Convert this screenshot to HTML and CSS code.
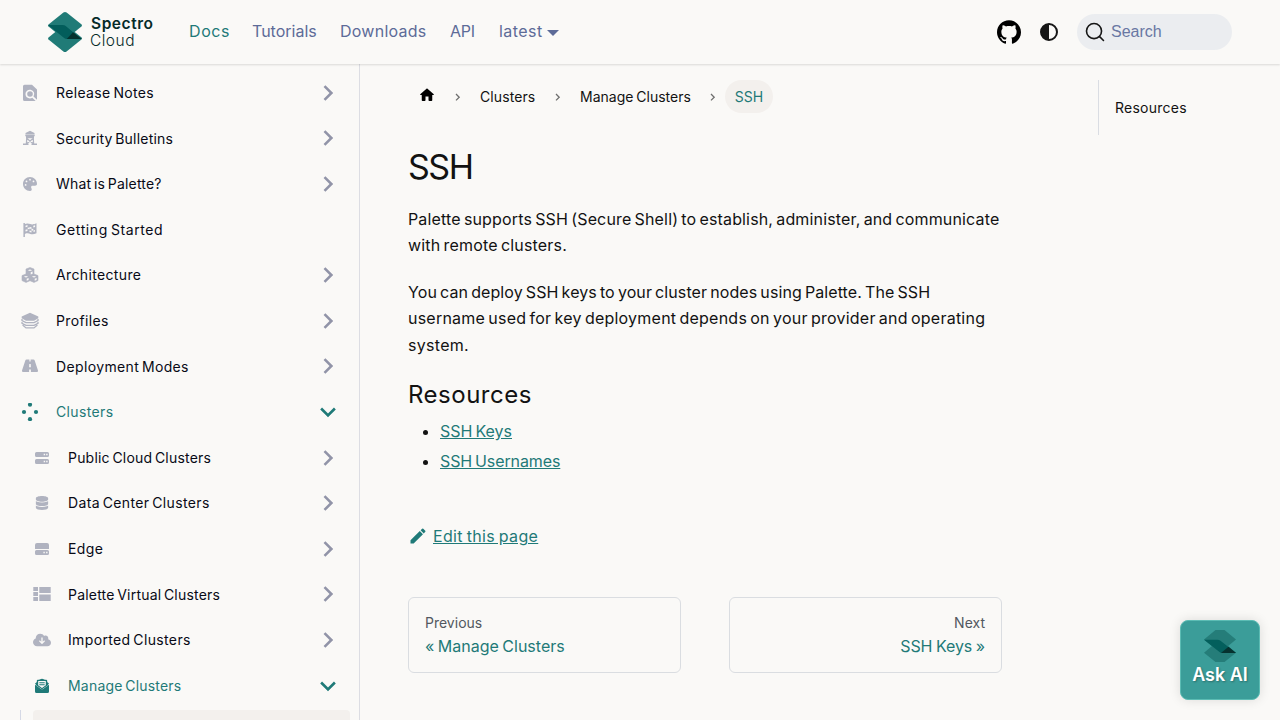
FILE: index.html
```html
<!DOCTYPE html>
<html lang="en">
<head>
<meta charset="utf-8">
<title>SSH | Palette</title>
<link rel="stylesheet" href="styles.css">
</head>
<body>
<svg class="sprite" width="0" height="0">
  <symbol id="chev" viewBox="0 0 24 24"><path d="M7.41 15.41 12 10.83l4.59 4.58L18 14l-6-6-6 6z"/></symbol>
  <symbol id="mark" viewBox="0 0 34 40">
    <path fill="#207b77" d="M15.400 .5q1.600-1 3.200 0L33.600 12.600q.8.900-.2 1.800L18.600 26.500q-1.600 1-3.200 0L.5 14.400q-.9-.9 0-1.800z"/>
    <path fill="#207b77" d="M15.400 13.500q1.600-1 3.200 0L33.600 25.600q.8.900-.2 1.800L18.600 39.500q-1.600 1-3.200 0L.5 27.400q-.9-.9 0-1.800z"/>
    <path fill="#025d5b" d="M0 13h14.500q2 0 3.500 1.200L33.300 27H19q-1.800 0-3.200-1.200z"/>
    <path fill="#05332f" d="M25 20.200 33.900 27H18.800z"/>
  </symbol>
</svg>
<header class="navbar">
  <a class="brand"><svg class="logo" width="34" height="40"><use href="#mark"/></svg>
    <svg class="wordmark" width="66" height="34"><text class="w1" x="1" y="17" textLength="62">Spectro</text><text class="w2" x="0" y="33.500" textLength="44.500">Cloud</text></svg></a>
  <nav class="links"><a class="on l1">Docs</a><a class="l2">Tutorials</a><a class="l3">Downloads</a><a class="l4">API</a><a class="l5">latest</a><i class="caret"></i></nav>
  <div class="tools">
    <svg class="gh" width="24" height="24" viewBox="0 0 24 24"><path d="M12 .297c-6.63 0-12 5.373-12 12 0 5.303 3.438 9.8 8.205 11.385.6.113.82-.258.82-.577 0-.285-.01-1.04-.015-2.04-3.338.724-4.042-1.61-4.042-1.61C4.422 18.07 3.633 17.7 3.633 17.7c-1.087-.744.084-.729.084-.729 1.205.084 1.838 1.236 1.838 1.236 1.07 1.835 2.809 1.305 3.495.998.108-.776.417-1.305.76-1.605-2.665-.3-5.466-1.332-5.466-5.93 0-1.31.465-2.38 1.235-3.22-.135-.303-.54-1.523.105-3.176 0 0 1.005-.322 3.3 1.23.96-.267 1.98-.399 3-.405 1.02.006 2.04.138 3 .405 2.28-1.552 3.285-1.23 3.285-1.23.645 1.653.24 2.873.12 3.176.765.84 1.23 1.91 1.23 3.22 0 4.61-2.805 5.625-5.475 5.92.42.36.81 1.096.81 2.22 0 1.606-.015 2.896-.015 3.286 0 .315.21.69.825.57C20.565 22.092 24 17.592 24 12.297c0-6.627-5.373-12-12-12"/></svg>
    <svg class="half" width="18" height="18" viewBox="0 0 18 18"><circle cx="9" cy="9" r="8" fill="none" stroke="#161616" stroke-width="2"/><path d="M9 1a8 8 0 0 0 0 16z"/></svg>
    <div class="search"><svg width="20" height="20" viewBox="0 0 20 20"><path d="M14.386 14.386l4.088 4.088-4.088-4.088A7.533 7.533 0 1 1 3.733 3.733a7.533 7.533 0 0 1 10.653 10.653z" fill="none" stroke="#161616" stroke-width="1.600" stroke-linecap="round" stroke-linejoin="round"/></svg><span>Search</span></div>
  </div>
</header>
<div class="page">
  <aside class="sidebar">
    <ul class="menu">
      <li><svg class="ic" viewBox="0 0 18 18"><path fill-rule="evenodd" d="M3.500.8H11l5 4.700v10.300L12.500 12.500a4.400 4.400 0 1 0-1.200 1.200L14.700 17H3.500Q2 17 2 15.500V2.300Q2 .8 3.500.8zM9 7.200a2.800 2.800 0 1 1 0 5.600 2.800 2.800 0 0 1 0-5.600z"/></svg><span class="s0">Release Notes</span><svg class="ch"><use href="#chev"/></svg></li>
      <li><svg class="ic" viewBox="0 0 18 18"><path d="M4.500 4 9 1.700 13.500 4v1.400H4.500zM5 6.200h8v3H5z"/><path fill="none" stroke="#b0b3c0" stroke-width="1.300" d="M4.300 6.500h9.400M5.800 8.500 5.400 15M12.200 8.500l.4 6.500M6 9.500l6 5M12 9.500l-6 5"/><path d="M2 14.600h5.500v1.400H2zM10.500 14.600H16v1.400h-5.500z"/></svg><span class="s1">Security Bulletins</span><svg class="ch"><use href="#chev"/></svg></li>
      <li><svg class="ic sm" viewBox="0 0 512 512"><path d="M512 256c0 .9 0 1.800 0 2.700-.4 36.500-33.600 61.300-70.100 61.300H344c-26.500 0-48 21.500-48 48 0 3.400.4 6.700 1 9.900 2.100 10.200 6.500 20 10.800 29.900 6.100 13.800 12.100 27.500 12.100 42 0 31.800-21.600 60.700-53.400 62-3.500.1-7 .2-10.600.2C114.600 512 0 397.400 0 256S114.600 0 256 0 512 114.600 512 256zM128 288a32 32 0 1 0-64 0 32 32 0 1 0 64 0zm0-96a32 32 0 1 0 0-64 32 32 0 1 0 0 64zM288 96a32 32 0 1 0-64 0 32 32 0 1 0 64 0zm96 96a32 32 0 1 0 0-64 32 32 0 1 0 0 64z"/></svg><span class="s2">What is Palette?</span><svg class="ch"><use href="#chev"/></svg></li>
      <li><svg class="ic" viewBox="0 0 18 18"><path d="M2.400 2h1.500v1c2-1 3.900-.5 5.400.1s3.500.5 6.200-.8v10c-2.700 1.300-4.700 1.200-6.200.6s-3.400-.8-5.400 0V16H2.400z"/><path fill="#faf9f7" d="M4.500 4.700l2-.6v1.600l-2 .6zm4 1.300 2 .3v1.600l-2-.3zm3.800-1.200 1.800-.5v1.600l-1.800.5zM6.700 6.500l1.800.2v1.600l-1.800-.2zM4.500 8.800l2-.5v1.600l-2 .5zm6-.7 1.800-.3v1.600l-1.800.4zM8.500 9.600l2 .3v1.500l-2-.4zm4-.1 1.500-.4v1.500l-1.500.4z"/></svg><span class="s3">Getting Started</span></li>
      <li><svg class="ic" viewBox="0 0 18 18"><path d="M9 1.500 13 3V8l4 1.600v5L13 16.400l-4-1.700-4 1.700-4-1.800v-5L5 8V3z" stroke="#b0b3c0" stroke-linejoin="round" stroke-width=".6"/><g fill="#faf9f7"><path d="M6.800 4.200 9 3.400l2.200.8L9 5zM9.700 6.200l1.900-.7V7.700l-1.900.8zM2.800 10.700l2.200-.8 2.200.8-2.200.8zm8 0 2.200-.8 2.200.8-2.200.8zM5.700 12.700l1.900-.7V14l-1.900.8zm8 0 1.900-.7V14l-1.900.8z"/></g></svg><span class="s4">Architecture</span><svg class="ch"><use href="#chev"/></svg></li>
      <li><svg class="ic" viewBox="0 0 18 18"><path d="M9 .8 17.300 4.500v1.800L13 8.800H5L.7 6.300V4.500z"/><path fill="none" stroke="#b0b3c0" stroke-width="1.300" d="M1 7v1.600L5 10.700h8l4-2.100V7M1 9.900v1.400L5 13.300h8l4-2V9.900M1.600 13 5 15.900h8l3.400-2.900"/></svg><span class="s5">Profiles</span><svg class="ch"><use href="#chev"/></svg></li>
      <li><svg class="ic" viewBox="0 0 18 18"><path d="M5.500 2.500h2.900v2h1.200v-2h2.900q.8 0 1.100.8L17 13.500q.3 1.500-1.200 1.500H9.900v-2.500H8.100V15H2.200Q.7 15 1 13.500L4.400 3.300q.3-.8 1.100-.8zM8.300 7l-.2 3.300h1.800L9.700 7z" fill-rule="evenodd"/></svg><span class="s6">Deployment Modes</span><svg class="ch"><use href="#chev"/></svg></li>
      <li class="active"><svg class="ic" viewBox="0 0 18 18"><circle cx="9" cy="1.700" r="2.100"/><circle cx="3" cy="9" r="2.100"/><circle cx="15" cy="9" r="2.100"/><circle cx="9" cy="16.200" r="2.100"/></svg><span class="s7">Clusters</span><svg class="ch down"><use href="#chev"/></svg></li>
      <li class="sub"><svg class="ic" viewBox="0 0 18 18"><path fill-rule="evenodd" d="M3.500 3h11q1.500 0 1.500 1.500v2Q16 8 14.500 8h-11Q2 8 2 6.500v-2Q2 3 3.500 3zm7.200 1.800v1.400h1.400V4.800zm2.500 0v1.400h1.400V4.800zM3.500 10h11q1.500 0 1.500 1.500v2q0 1.500-1.500 1.500h-11Q2 15 2 13.500v-2Q2 10 3.500 10zm7.200 1.800v1.400h1.400v-1.400zm2.500 0v1.400h1.400v-1.400z"/></svg><span class="s8">Public Cloud Clusters</span><svg class="ch"><use href="#chev"/></svg></li>
      <li class="sub"><svg class="ic sm" viewBox="0 0 448 512"><path d="M448 80v48c0 44.200-100.300 80-224 80S0 172.200 0 128V80C0 35.800 100.300 0 224 0s224 35.800 224 80zM393.200 214.700c20.800-7.400 39.900-16.900 54.800-28.600V288c0 44.200-100.300 80-224 80S0 332.200 0 288V186.100c14.900 11.800 34 21.200 54.800 28.600C99.700 230.700 159.500 240 224 240s124.300-9.300 169.200-25.300zM0 346.100c14.900 11.800 34 21.200 54.800 28.600C99.700 390.700 159.500 400 224 400s124.300-9.300 169.200-25.300c20.800-7.400 39.900-16.900 54.800-28.600V432c0 44.200-100.300 80-224 80S0 476.200 0 432v-85.900z"/></svg><span class="s9">Data Center Clusters</span><svg class="ch"><use href="#chev"/></svg></li>
      <li class="sub"><svg class="ic" viewBox="0 0 18 18"><path fill-rule="evenodd" d="M4 3h10q2 0 2 2v4H2V5q0-2 2-2zM3.500 10h11q1.500 0 1.500 1.500v2q0 1.500-1.500 1.500h-11Q2 15 2 13.500v-2Q2 10 3.500 10zm6.900 1.800v1.400h1.400v-1.400zm2.700 0v1.400h1.400v-1.400z"/></svg><span class="s10">Edge</span><svg class="ch"><use href="#chev"/></svg></li>
      <li class="sub"><svg class="ic" viewBox="0 0 18 18"><path d="M.3 2h4.700v4H.3zM6.300 2h11.400v6H6.300zM.3 7h4.700v4H.3zM.3 12h4.700v4H.3zM6.300 9.500h11.400V16H6.300z"/></svg><span class="s11">Palette Virtual Clusters</span><svg class="ch"><use href="#chev"/></svg></li>
      <li class="sub"><svg class="ic" viewBox="0 0 640 512"><path fill-rule="evenodd" d="M144 480C64.500 480 0 415.500 0 336c0-62.800 40.200-116.200 96.200-135.900-.1-2.700-.2-5.400-.2-8.100 0-88.400 71.600-160 160-160 59.300 0 111 32.200 138.700 80.200C409.900 102 428.300 96 448 96c53 0 96 43 96 96 0 12.200-2.300 23.800-6.400 34.600C596 238.400 640 290.100 640 352c0 70.700-57.300 128-128 128H144zm79-167 80 80c9.400 9.400 24.600 9.400 33.900 0l80-80c22-22-12-56-34-34l-39 39V184c0-32-48-32-48 0v134l-39-39c-22-22-56 12-34 34z"/></svg><span class="s12">Imported Clusters</span><svg class="ch"><use href="#chev"/></svg></li>
      <li class="sub active"><svg class="ic" viewBox="0 0 18 18"><path d="M2 7.700 8 12q1 .7 2 0l6-4.300V14.500q0 1.500-1.500 1.500h-11Q2 16 2 14.500zM2 6.600l2-1.500V9zM16 6.600l-2-1.500V9z"/><path fill-rule="evenodd" d="M6 2.800 8 2q1-.7 2 0l2 .8h1.200q1 0 1 1v5L9.500 12h-1L3.800 8.800v-5q0-1 1-1zM5.200 4v4.200L9 11l3.800-2.800V4z"/><path d="M6.300 5.200h5.400v1H6.300zM6.300 7.200h5.400v1H6.300z"/></svg><span class="s13">Manage Clusters</span><svg class="ch down"><use href="#chev"/></svg></li>
      <li class="nested"><div></div></li>
    </ul>
  </aside>
  <main class="main">
    <article class="article">
      <nav class="crumbs">
        <a class="home"><svg width="18" height="18" viewBox="0 0 24 24"><path d="M10 19v-5h4v5c0 .55.45 1 1 1h3c.55 0 1-.45 1-1v-7h1.700c.46 0 .68-.57.33-.87L12.670 3.600c-.38-.34-.96-.34-1.340 0l-8.360 7.530c-.34.3-.13.870.330.870H5v7c0 .55.45 1 1 1h3c.55 0 1-.45 1-1z"/></svg></a><svg class="sep"><path d="m1 1 3.200 3.200L1 7.400"/></svg><a class="c1">Clusters</a><svg class="sep"><path d="m1 1 3.200 3.200L1 7.400"/></svg><a class="c2">Manage Clusters</a><svg class="sep"><path d="m1 1 3.200 3.200L1 7.400"/></svg><a class="here">SSH</a>
      </nav>
      <h1>SSH</h1>
      <p><span class="p1">Palette supports SSH (Secure Shell) to establish, administer, and communicate</span><br><span class="p2">with remote clusters.</span></p>
      <p><span class="p3">You can deploy SSH keys to your cluster nodes using Palette. The SSH</span><br><span class="p4">username used for key deployment depends on your provider and operating</span><br><span class="p5">system.</span></p>
      <h2>Resources</h2>
      <ul class="res"><li><a class="r1">SSH Keys</a></li><li><a class="r2">SSH Usernames</a></li></ul>
      <div class="edit"><svg width="20" height="20" viewBox="0 0 40 40"><path d="m34.500 11.700-3 3.100-6.300-6.300 3.100-3q.5-.5 1.200-.5t1.100.5l3.900 3.900q.5.400.5 1.100t-.5 1.200zM5 28.700 23.600 10.100l6.300 6.300L11.300 35H5z"/></svg><a>Edit this page</a></div>
      <div class="pager"><a><small>Previous</small><span class="g1">« Manage Clusters</span></a><a class="next"><small>Next</small><span class="g2">SSH Keys »</span></a></div>
    </article>
    <aside class="toc"><a>Resources</a></aside>
  </main>
</div>
<button class="ask"><svg width="32" height="32" viewBox="0 0 32 32"><path fill="#257d79" d="M11.500 0h9L32 9.500 20.500 19h-9L0 9.500zM11.500 13h9L32 22.700 20.500 32h-9L0 22.700z"/><path fill="#035f5c" d="M0 9.700h13.500q1.700 0 3 1L32 23H18q-1.400 0-2.500-.9z"/><path fill="#06322f" d="M24.500 16.700 32 23H17z"/></svg><span>Ask AI</span></button>
</body>
</html>
```
FILE: styles.css
```css
* { box-sizing: border-box; }
html, body { height: 100%; overflow: hidden; }
body { margin: 0; background: #faf9f7; color: #121212; font: 16px/26.4px Inter, sans-serif; }
.sprite { position: absolute; }
.navbar { position: relative; display: flex; align-items: center; height: 64px; padding: 0 48px; box-shadow: 0 1px 2px rgba(0,0,0,.13); z-index: 2; background: #faf9f7; }
.brand { display: flex; gap: 8px; width: 141px; align-items: center; }
.wordmark { overflow: visible; margin-top: -6px; }
.wordmark text { fill: #062b29; font-family: Inter, sans-serif; }
.wordmark .w1 { font-size: 15.500px; font-weight: 600; }
.wordmark .w2 { font-size: 15.500px; font-weight: 300; }
.links { display: flex; align-items: center; color: #5d6b98; white-space: nowrap; }
.links a { margin-right: 24px; margin-top: -2px; }
.links .on { color: #1f7a78; }
.links .l1 { width: 40px; letter-spacing: .6px; }
.links .l2 { width: 63px; letter-spacing: 0; margin-left: -1px; margin-right: 25px; }
.links .l3 { width: 86px; letter-spacing: .25px; }
.links .l4 { width: 25px; letter-spacing: -.2px; }
.links .l5 { width: 43px; margin-right: 5px; letter-spacing: .45px; }
.caret { border: 6px solid transparent; border-top-color: #5d6b98; border-bottom: 0; margin-top: 2px; }
.tools { display: flex; align-items: center; margin-left: auto; }
.half { margin: 0 19px; }
.half path { fill: #161616; }
.search { display: flex; align-items: center; gap: 6px; width: 155px; height: 36px; padding: 0 8px; border-radius: 18px; background: #ebedf0; color: #6977a3; font: 16px "Liberation Sans", sans-serif; }
.page { display: flex; height: 656px; }
.sidebar { width: 360px; flex: none; border-right: 1px solid #dcdde3; overflow: hidden; }
.menu { list-style: none; margin: 0; padding: 8px 8px 0; font-size: 14px; font-weight: 400; word-spacing: -1.500px; letter-spacing: .36px; color: #080a16; white-space: nowrap; }
.menu li { display: flex; align-items: center; height: 41.600px; margin-bottom: 4px; padding: 0 11px 0 13px; }
.menu .sub { padding-left: 25px; }
.menu li span { margin-left: 17px; padding-top: 1px; }
.menu .s1, .menu .s2, .menu .s8 { letter-spacing: .2px; }
.menu .s3 { letter-spacing: .6px; }
.menu .s11 { letter-spacing: .2px; }
.menu .s13 { letter-spacing: .2px; }
.ic { width: 18px; height: 18px; fill: #b0b3c0; flex: none; }
.ic.sm { width: 14px; height: 14px; margin: 0 2px; }
.ch { width: 24px; height: 24px; margin-left: auto; fill: #9194a8; overflow: visible; transform: rotate(90deg) scale(1.300); }
.menu .active { color: #1f7a78; }
.active svg { fill: #1f7a78; }
.ch.down { transform: rotate(180deg) scale(1.300); }
.menu .nested { height: 42px; margin: 0 0 0 12px; padding: 0 0 0 12px; border-left: 1px solid #d5d9e6; }
.nested div { height: 42px; flex: none; width: 317px; border-radius: 4px; background: #f3f0ed; }
.main { display: flex; flex: 1; padding: 16px 32px 0 48px; }
.article { width: 594px; white-space: nowrap; }
.crumbs { display: flex; align-items: center; height: 33px; font-size: 14px; line-height: 22px; }
.crumbs .c1, .crumbs .c2 { padding-top: 1px; }
.home { padding: 0 10px; height: 21px; line-height: 0; }
.home svg { margin: 0 -.5px; }
.sep { width: 6px; height: 9px; fill: none; stroke: #6e6e6e; stroke-width: 1.300; margin: 2px 9px 0 10px; }
.c1 { width: 75px; padding-left: 10px; letter-spacing: .1px; }
.c2 { width: 130px; padding-left: 10px; word-spacing: -1px; }
.here { width: 48px; height: 33px; line-height: 34px; text-align: center; border-radius: 17px; background: #f3f0ed; color: #1f7a78; }
h1 { margin: 33px 0 18px; font-size: 34px; line-height: 42px; font-weight: 400; letter-spacing: -1.500px; }
p { margin: 0 0 20px; word-spacing: -1.500px; }
.p1 { letter-spacing: .155px; }
.p2 { letter-spacing: .18px; }
.p4 { letter-spacing: .23px; }
.p3 { letter-spacing: .09px; }
.p5 { letter-spacing: .3px; }
h2 { margin: 22px 0 8px; font-size: 24px; line-height: 30px; font-weight: 400; letter-spacing: .5px; }
.res { margin: 0 0 48px; padding-left: 32px; word-spacing: -1.500px; }
.res li { margin-bottom: 4px; }
.r2 { letter-spacing: -.1px; }
.res a, .edit a { color: #1f7a78; text-decoration: underline; }
.edit { display: flex; align-items: center; gap: 5px; word-spacing: -1px; letter-spacing: .33px; }
.edit svg { fill: #1f7a78; }
.pager { display: grid; grid-template-columns: 1fr 1fr; gap: 48px; margin-top: 48px; }
.pager a { display: flex; flex-direction: column; height: 76px; padding: 14px 16px; border: 1px solid #dadde1; border-radius: 6px; color: #1f7a78; line-height: 26px; word-spacing: -1px; }
.pager small { font-size: 14px; line-height: 21px; color: #525860; }
.pager .next { text-align: right; }
.g2 { letter-spacing: -.05px; }
.toc { width: 150px; height: 55px; margin-left: 96px; padding: 15px 16px; border-left: 1px solid #dadde3; font-size: 14px; font-weight: 400; letter-spacing: .25px; }
.ask { position: absolute; left: 1180px; top: 620px; width: 80px; height: 80px; display: flex; flex-direction: column; align-items: center; padding: 9px 0 0; border: 1px solid #5cbcb4; border-radius: 8px; background: #3b9d99; box-shadow: 0 0 12px rgba(0,0,0,.12); color: #fff; font: 600 18px/26px Inter, sans-serif; text-shadow: 1px 1px 2px rgba(0,0,0,.3); }
```
